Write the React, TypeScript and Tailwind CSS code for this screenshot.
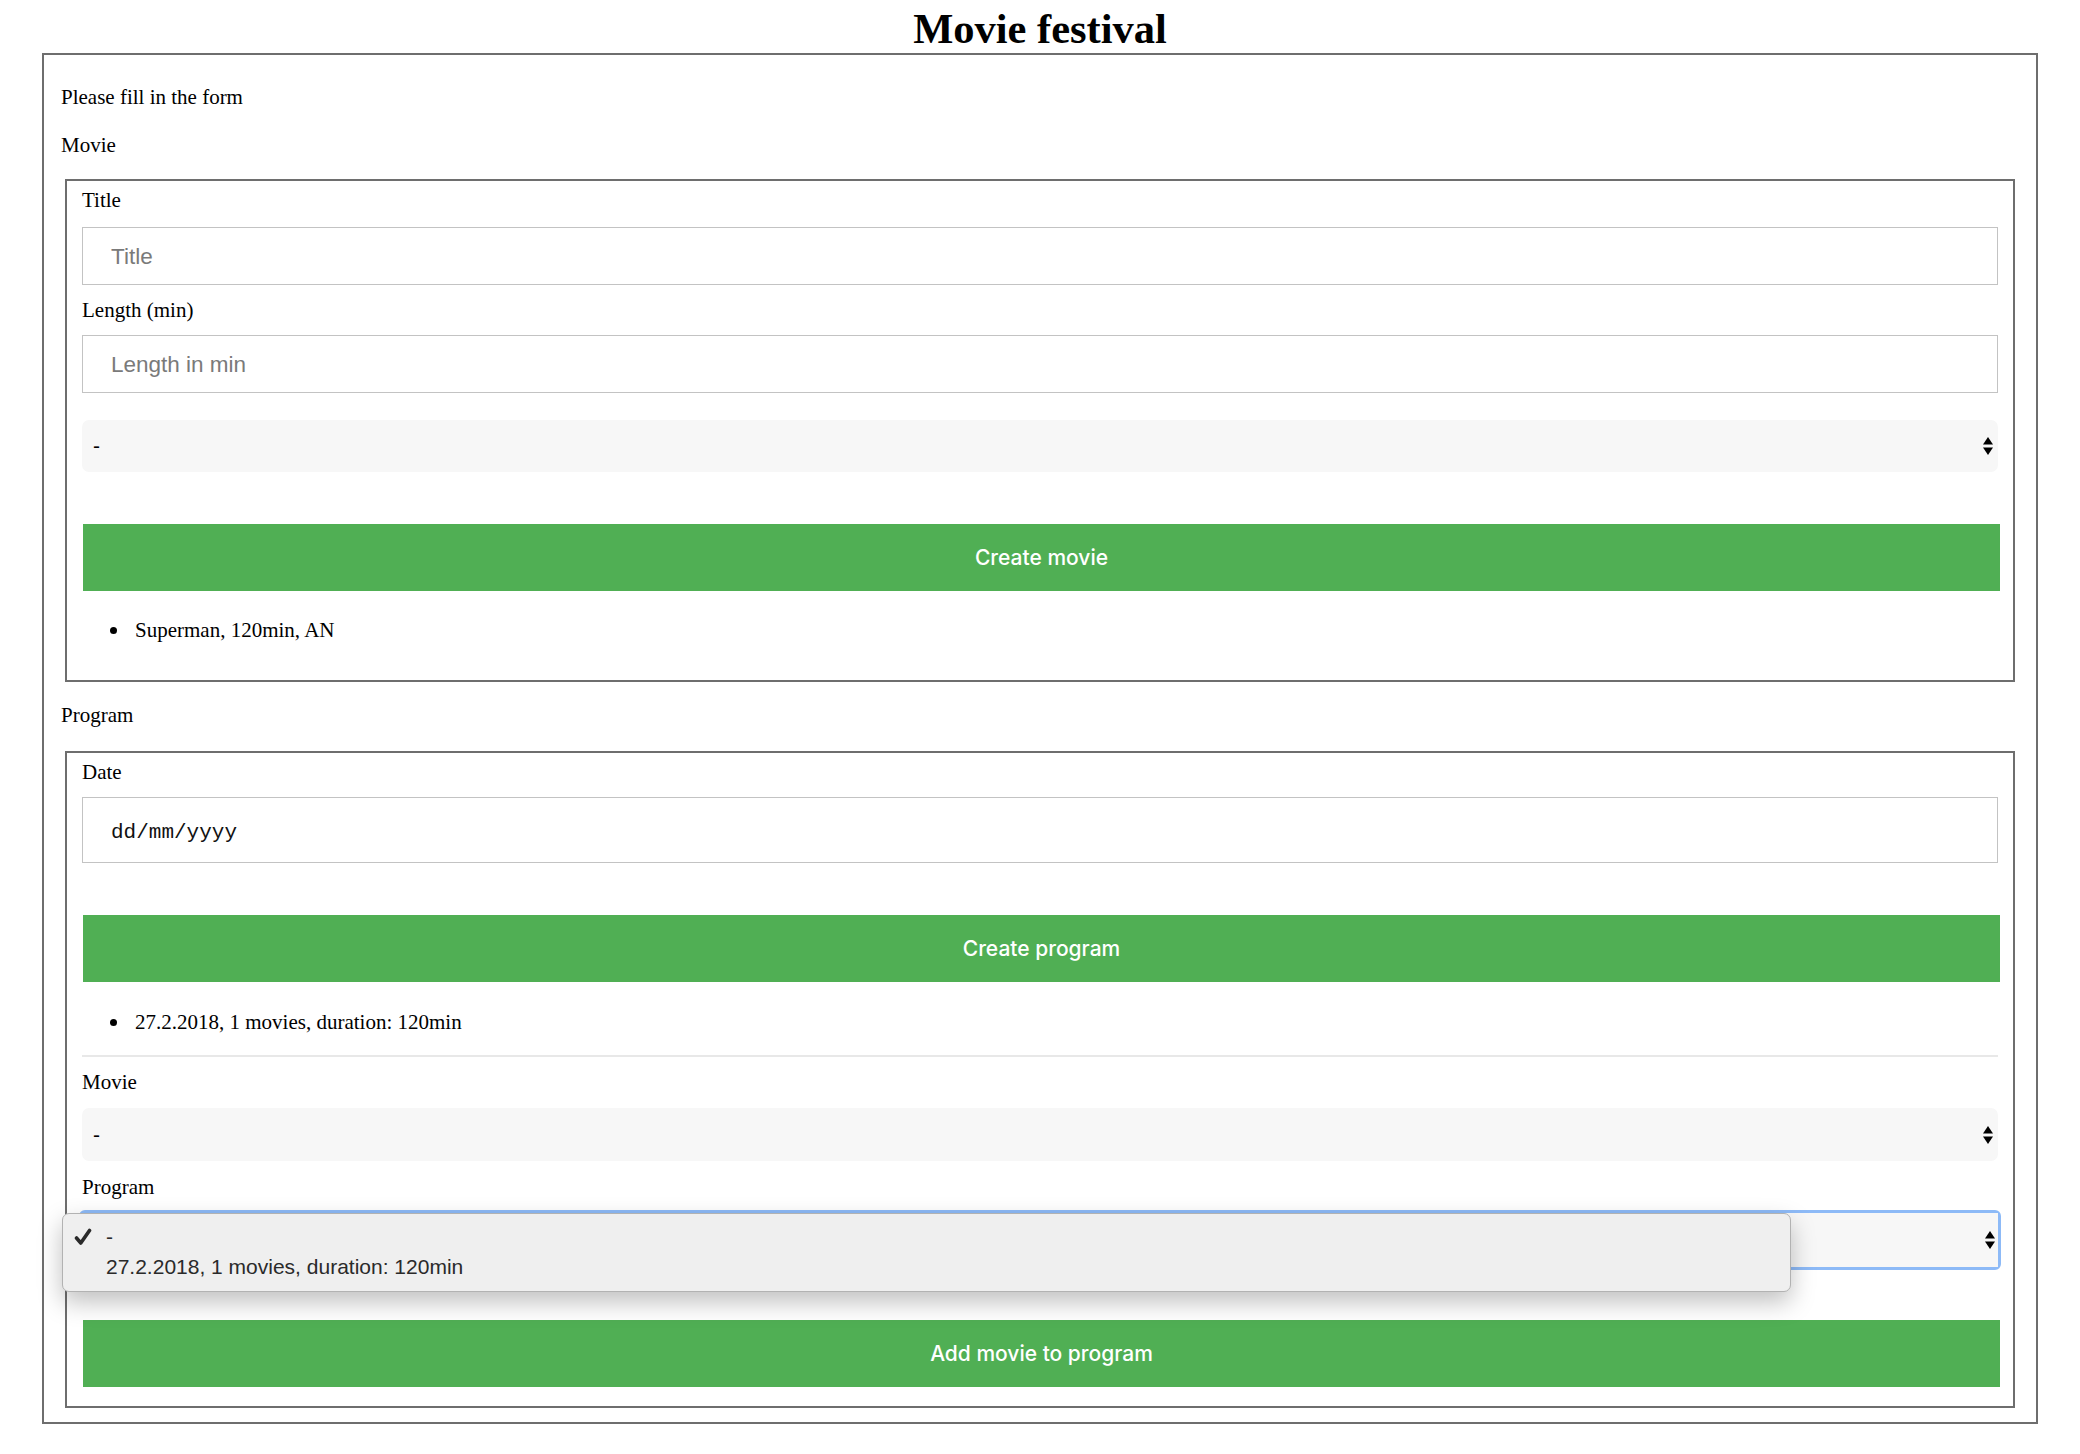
import React from "react";

const serif = "font-['Liberation_Serif','Times_New_Roman',serif]";

function SelectArrows() {
  return (
    <svg width="10" height="18" viewBox="0 0 10 18" className="shrink-0">
      <path d="M5 0 L10 7.5 L0 7.5 Z" fill="#000" />
      <path d="M0 10.5 L10 10.5 L5 18 Z" fill="#000" />
    </svg>
  );
}

function Label({ children, className = "" }: { children: React.ReactNode; className?: string }) {
  return <div className={`text-[21px] leading-[24px] ${className}`}>{children}</div>;
}

function TextInput({ placeholder, className = "" }: { placeholder: string; className?: string }) {
  return (
    <input
      placeholder={placeholder}
      className={`block w-[calc(100%-2px)] border border-[#c3c3c3] bg-white pl-[28px] pt-[2px] font-['Liberation_Sans',Arial,sans-serif] text-[22.5px] text-black outline-none placeholder:text-[#7a7a7a] ${className}`}
    />
  );
}

function SelectBox({ className = "" }: { className?: string }) {
  return (
    <div
      className={`flex w-[calc(100%-2px)] items-center justify-between rounded-[7px] bg-[#f7f7f7] pl-[11px] pr-[5px] font-['Liberation_Sans',Arial,sans-serif] text-[21px] text-black ${className}`}
    >
      <span>-</span>
      <SelectArrows />
    </div>
  );
}

function GreenButton({ children, className = "" }: { children: React.ReactNode; className?: string }) {
  return (
    <button
      className={`ml-[1px] block h-[67px] w-[calc(100%-1px)] bg-[#50af54] font-['Inter',sans-serif] text-[21px] font-medium text-white ${className}`}
    >
      {children}
    </button>
  );
}

function Bullets({ items, className = "" }: { items: string[]; className?: string }) {
  return (
    <ul className={`pl-[28px] text-[21px] leading-[24px] ${className}`}>
      {items.map((item) => (
        <li key={item} className="flex items-center">
          <span className="mr-[18px] h-[7px] w-[7px] shrink-0 rounded-full bg-black" />
          <span>{item}</span>
        </li>
      ))}
    </ul>
  );
}

function CheckMark() {
  return (
    <svg width="18" height="18" viewBox="0 0 18 18">
      <path
        d="M2.5 10 L6.8 15 L15.5 2.5"
        stroke="#2a2a2a"
        strokeWidth="3.6"
        fill="none"
        strokeLinecap="round"
        strokeLinejoin="round"
      />
    </svg>
  );
}

function ProgramSelect() {
  return (
    <div className="relative mt-[11px]">
      <div className="ml-[-3px] mr-[-1px] rounded-[6px] border-[3px] border-[#8dbaf7]">
        <div className="flex h-[54px] items-center justify-end bg-[#f7f7f7] pr-[3px]">
          <SelectArrows />
        </div>
      </div>

      {/* open dropdown menu */}
      <div className="absolute left-[-20px] top-[3px] w-[1729px] rounded-[7px] border border-[#b2b2b2] bg-[#efefef] pb-[9px] pt-[8px] font-['Liberation_Sans',Arial,sans-serif] text-[21px] leading-[30px] text-[#2a2a2a] shadow-[0_10px_24px_rgba(0,0,0,0.25)]">
        <div className="flex items-center">
          <div className="flex w-[43px] justify-end pr-[14px]">
            <CheckMark />
          </div>
          <span>-</span>
        </div>
        <div className="pl-[43px]">27.2.2018, 1 movies, duration: 120min</div>
      </div>
    </div>
  );
}

export default function App() {
  return (
    <div className={`min-h-screen bg-white text-black ${serif}`}>
      <h1 className="pt-[5px] text-center text-[42.5px] font-bold leading-[47px]">Movie festival</h1>

      <div className="mx-[42px] mt-[1px] border-2 border-[#6e6e6e] px-[17px] pb-[14px] pt-[30px]">
        <Label>Please fill in the form</Label>
        <Label className="mt-[24px]">Movie</Label>

        <div className="mx-[4px] mt-[22px] border-2 border-[#6e6e6e] pb-[38px] pl-[15px] pr-[13px] pt-[7px]">
          <Label>Title</Label>
          <TextInput placeholder="Title" className="mt-[15px] h-[58px]" />
          <Label className="mt-[13px]">Length (min)</Label>
          <TextInput placeholder="Length in min" className="mt-[13px] h-[58px]" />
          <SelectBox className="mt-[27px] h-[52px]" />
          <GreenButton className="mt-[52px]">Create movie</GreenButton>
          <Bullets items={["Superman, 120min, AN"]} className="mt-[27px]" />
        </div>

        <Label className="mt-[21px]">Program</Label>

        <div className="mx-[4px] mt-[24px] border-2 border-[#6e6e6e] pb-[19px] pl-[15px] pr-[13px] pt-[7px]">
          <Label>Date</Label>
          <div className="mt-[13px] flex h-[66px] w-[calc(100%-2px)] items-center border border-[#c3c3c3] pl-[28px] pt-[6px] font-['Liberation_Mono','Courier_New',monospace] text-[21px] text-[#111]">
            dd/mm/yyyy
          </div>
          <GreenButton className="mt-[52px]">Create program</GreenButton>
          <Bullets items={["27.2.2018, 1 movies, duration: 120min"]} className="mt-[28px]" />
          <div className="mt-[21px] h-[2px] w-[calc(100%-2px)] bg-[#e8e8e8]" />
          <Label className="mt-[13px]">Movie</Label>
          <SelectBox className="mt-[14px] h-[53px]" />
          <Label className="mt-[14px]">Program</Label>
          <ProgramSelect />
          <GreenButton className="mt-[50px]">Add movie to program</GreenButton>
        </div>
      </div>
    </div>
  );
}
